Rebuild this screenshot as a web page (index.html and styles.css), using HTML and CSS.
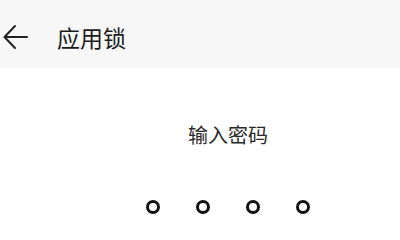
FILE: index.html
```html
<!DOCTYPE html>
<html lang="zh">
<head>
<meta charset="utf-8">
<link rel="stylesheet" href="styles.css">
</head>
<body>
<div class="app">
  <header class="bar">
    <svg class="back" width="26" height="26" viewBox="0 0 26 26" fill="none" stroke="#222" stroke-width="2" stroke-linecap="round" stroke-linejoin="round">
      <path d="M24 13H2M12 2L1.5 13 12 24"/>
    </svg>
    <h1 class="title">应用锁</h1>
  </header>
  <main class="body">
    <p class="prompt">输入密码</p>
    <div class="dots">
      <span class="dot"></span>
      <span class="dot"></span>
      <span class="dot"></span>
      <span class="dot"></span>
    </div>
  </main>
</div>
</body>
</html>
```
FILE: styles.css
```css
html, body {
  margin: 0;
  padding: 0;
  background: #ffffff;
  font-family: "Noto Sans CJK SC", "Noto Sans", sans-serif;
}
.app {
  width: 400px;
  height: 240px;
  overflow: hidden;
}
.bar {
  height: 68px;
  background: #f7f7f7;
  display: flex;
  align-items: center;
  padding-left: 3px;
  box-sizing: border-box;
}
.back {
  display: block;
  margin-top: 6px;
}
.title {
  margin: 0 0 0 28px;
  font-size: 23px;
  font-weight: 400;
  color: #1c1c1c;
  line-height: 1;
  padding-top: 6px;
}
.body {
  display: flex;
  flex-direction: column;
  align-items: center;
  padding-left: 56px;
}
.prompt {
  margin: 55px 0 0 0;
  font-size: 20px;
  line-height: 24px;
  color: #2a2a2a;
}
.dots {
  display: flex;
  gap: 36px;
  margin-top: 53px;
}
.dot {
  width: 14px;
  height: 14px;
  box-sizing: border-box;
  border: 3px solid #111;
  border-radius: 50%;
}
```
